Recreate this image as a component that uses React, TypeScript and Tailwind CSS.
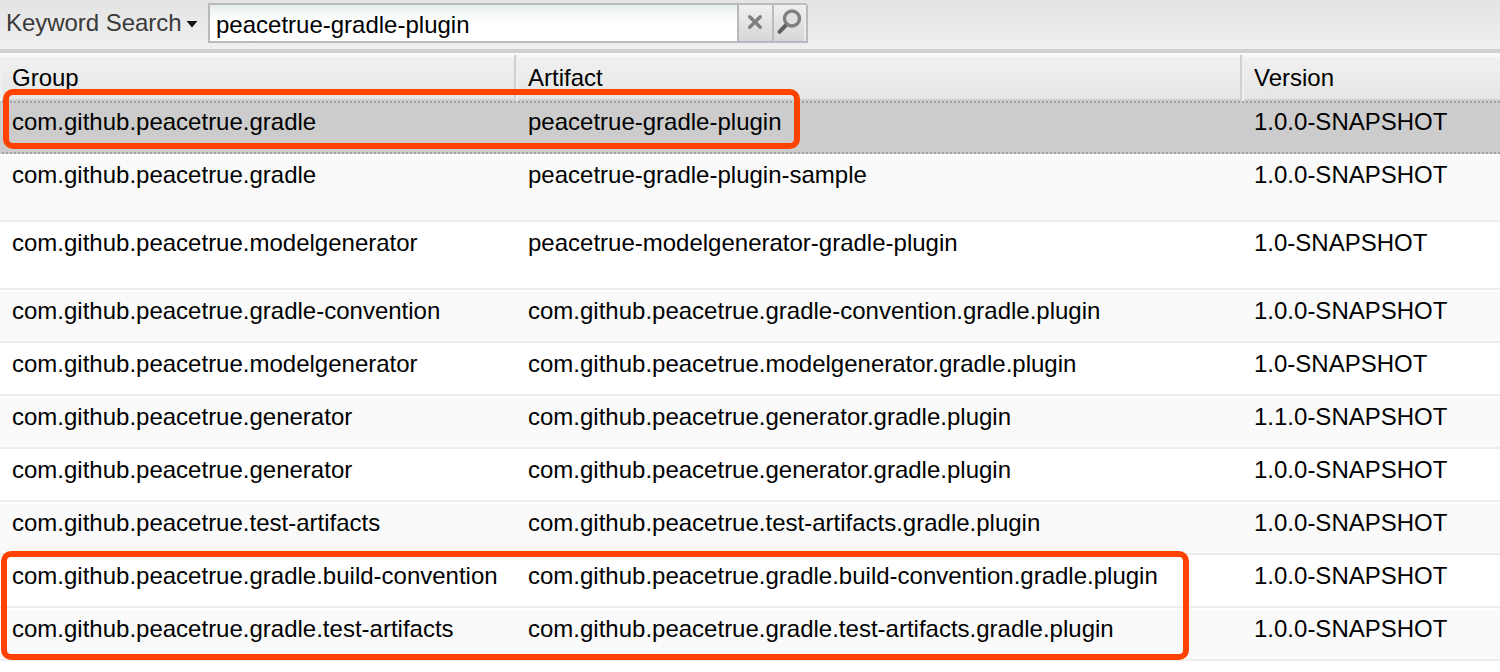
const rows = [
  { group: "com.github.peacetrue.gradle", artifact: "peacetrue-gradle-plugin", version: "1.0.0-SNAPSHOT", selected: true },
  { group: "com.github.peacetrue.gradle", artifact: "peacetrue-gradle-plugin-sample", version: "1.0.0-SNAPSHOT", tall: true },
  { group: "com.github.peacetrue.modelgenerator", artifact: "peacetrue-modelgenerator-gradle-plugin", version: "1.0-SNAPSHOT", tall: true },
  { group: "com.github.peacetrue.gradle-convention", artifact: "com.github.peacetrue.gradle-convention.gradle.plugin", version: "1.0.0-SNAPSHOT" },
  { group: "com.github.peacetrue.modelgenerator", artifact: "com.github.peacetrue.modelgenerator.gradle.plugin", version: "1.0-SNAPSHOT" },
  { group: "com.github.peacetrue.generator", artifact: "com.github.peacetrue.generator.gradle.plugin", version: "1.1.0-SNAPSHOT" },
  { group: "com.github.peacetrue.generator", artifact: "com.github.peacetrue.generator.gradle.plugin", version: "1.0.0-SNAPSHOT" },
  { group: "com.github.peacetrue.test-artifacts", artifact: "com.github.peacetrue.test-artifacts.gradle.plugin", version: "1.0.0-SNAPSHOT" },
  { group: "com.github.peacetrue.gradle.build-convention", artifact: "com.github.peacetrue.gradle.build-convention.gradle.plugin", version: "1.0.0-SNAPSHOT" },
  { group: "com.github.peacetrue.gradle.test-artifacts", artifact: "com.github.peacetrue.gradle.test-artifacts.gradle.plugin", version: "1.0.0-SNAPSHOT" },
];

function DottedLine() {
  return <div className="h-[2px] bg-[repeating-linear-gradient(90deg,#cccccc_0,#cccccc_2px,#a3a3a3_2px,#a3a3a3_4px)]" />;
}

function Toolbar() {
  return (
    <div className="flex h-[53px] items-start border-b-4 border-[#d0d0d0] bg-linear-to-b from-[#e4e4e4] to-[#efefef]">
      <button className="ml-[6px] mt-[9px] flex h-7 w-[202px] items-center text-[#3a3a3a]">
        <span className="whitespace-nowrap tracking-[-0.04px]">Keyword Search</span>
        <svg className="ml-[4px] mt-[2px]" width="12" height="8" viewBox="0 0 12 8">
          <path d="M0.500 1h11L6 7.500z" fill="#111" />
        </svg>
      </button>
      <input
        className="mt-[3px] h-10 w-[531px] border-2 border-[#b9b9b9] bg-[linear-gradient(#e6ecee_0,#f8fafa_10px,#ffffff_20px)] pb-0 pl-[6px] pt-[3px] outline-none"
        defaultValue="peacetrue-gradle-plugin"
        spellCheck={false}
      />
      <div className="mt-[3px] flex h-10 w-[69px] rounded-tr-[4px] border-b-2 border-r-2 border-t-2 border-[#bcbcbc] border-b-[#b5b8c8] bg-linear-to-b from-[#f0f0f0] to-[#d6d6d6]">
        <button className="flex w-[35px] items-center justify-center border-r-2 border-[#bcbcbc] pb-[2px] pr-[1px]" aria-label="Clear">
          <svg width="16" height="16" viewBox="0 0 16 16">
            <path d="M2.700 2.700l10.600 10.600M13.300 2.700L2.700 13.300" stroke="#808080" strokeWidth="3.4" strokeLinecap="round" />
          </svg>
        </button>
        <button className="flex flex-1 items-center justify-center border-r-2 border-[#ededed] pb-[3px]" aria-label="Search">
          <svg width="26" height="26" viewBox="0 0 26 26" fill="none">
            <path d="M11 15L3.500 22.800" stroke="#606060" strokeWidth="4" strokeLinecap="round" />
            <circle cx="16" cy="9.500" r="7.500" stroke="#808080" strokeWidth="3.400" fill="#e0e0e0" />
          </svg>
        </button>
      </div>
    </div>
  );
}

function HeaderCell({ label, className }: { label: string; className: string }) {
  return <div className={`mt-[2px] h-[46px] pt-[9px] leading-[28px] ${className}`}>{label}</div>;
}

export default function App() {
  return (
    <div className="relative h-[672px] w-[1500px] overflow-hidden bg-white font-['Liberation_Sans',Arial,sans-serif] text-[24px] leading-[28px] text-black">
      <Toolbar />
      <div className="grid h-[48px] grid-cols-[516px_726px_1fr] bg-[linear-gradient(#f9f9f9_0,#f9f9f9_4px,#f1f1f1_4px,#e5e5e5_46px,#d0d0d0_46px)]">
        <HeaderCell label="Group" className="border-x-2 border-l-[#f0f0f0] border-r-[#d0d0d0] pl-[10px]" />
        <HeaderCell label="Artifact" className="border-x-2 border-l-[#f0f0f0] border-r-[#d0d0d0] pl-[10px]" />
        <HeaderCell label="Version" className="border-l-2 border-[#f0f0f0] pl-[10px]" />
      </div>
      {rows.map((row, i) => (
        <div
          key={i}
          className={`flex flex-col ${row.tall ? "h-[68px]" : "h-[53px]"} ${
            row.selected ? "bg-[#cccccc]" : i % 2 ? "border-b-2 border-t-2 border-b-[#ededed] border-t-white bg-[#fafafa]" : "border-b-2 border-t-2 border-b-[#ededed] border-t-white bg-white"
          }`}
        >
          {row.selected && <DottedLine />}
          <div className="grid flex-1 grid-cols-[516px_726px_1fr] whitespace-nowrap pt-[5px]">
            <span className="pl-3">{row.group}</span>
            <span className="pl-3">{row.artifact}</span>
            <span className="pl-3">{row.version}</span>
          </div>
          {row.selected && <DottedLine />}
        </div>
      ))}
      <div className="absolute left-[3px] top-[89px] h-[60px] w-[797px] rounded-[10px] border-6 border-[#ff4200]" />
      <div className="absolute left-[1px] top-[551px] h-[109px] w-[1188px] rounded-[10px] border-6 border-[#ff4200]" />
    </div>
  );
}
